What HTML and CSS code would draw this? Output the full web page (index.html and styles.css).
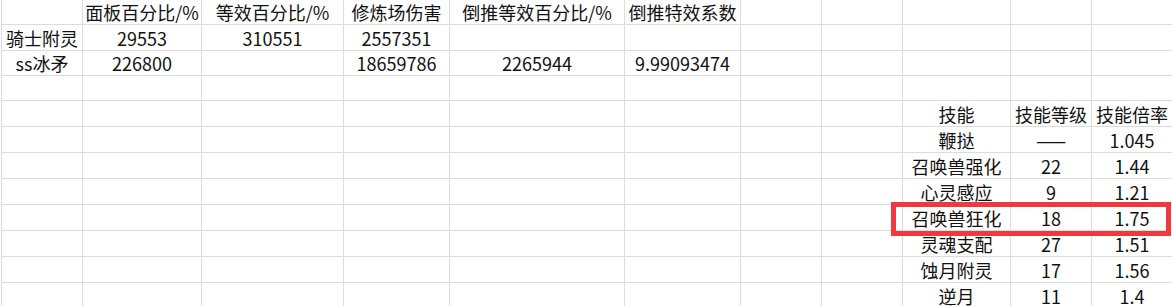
FILE: index.html
```html
<!DOCTYPE html>
<html lang="zh-CN">
<head>
<meta charset="utf-8">
<title>Sheet</title>
<link rel="stylesheet" href="styles.css">
</head>
<body>
<div class="sheet">
  <div class="grid">
    <div></div><div>面板百分比/%</div><div>等效百分比/%</div><div>修炼场伤害</div><div>倒推等效百分比/%</div><div>倒推特效系数</div><div></div><div></div><div></div><div></div><div></div>
    <div>骑士附灵</div><div>29553</div><div>310551</div><div>2557351</div><div></div><div></div><div></div><div></div><div></div><div></div><div></div>
    <div>ss冰矛</div><div>226800</div><div></div><div>18659786</div><div>2265944</div><div>9.99093474</div><div></div><div></div><div></div><div></div><div></div>
    <div></div><div></div><div></div><div></div><div></div><div></div><div></div><div></div><div></div><div></div><div></div>
    <div></div><div></div><div></div><div></div><div></div><div></div><div></div><div></div><div>技能</div><div>技能等级</div><div>技能倍率</div>
    <div></div><div></div><div></div><div></div><div></div><div></div><div></div><div></div><div>鞭挞</div><div>——</div><div>1.045</div>
    <div></div><div></div><div></div><div></div><div></div><div></div><div></div><div></div><div>召唤兽强化</div><div>22</div><div>1.44</div>
    <div></div><div></div><div></div><div></div><div></div><div></div><div></div><div></div><div>心灵感应</div><div>9</div><div>1.21</div>
    <div></div><div></div><div></div><div></div><div></div><div></div><div></div><div></div><div>召唤兽狂化</div><div>18</div><div>1.75</div>
    <div></div><div></div><div></div><div></div><div></div><div></div><div></div><div></div><div>灵魂支配</div><div>27</div><div>1.51</div>
    <div></div><div></div><div></div><div></div><div></div><div></div><div></div><div></div><div>蚀月附灵</div><div>17</div><div>1.56</div>
    <div></div><div></div><div></div><div></div><div></div><div></div><div></div><div></div><div>逆月</div><div>11</div><div>1.4</div>
  </div>
  <div class="highlight"></div>
</div>
</body>
</html>
```

FILE: styles.css
```css
html, body {
  margin: 0;
  padding: 0;
  background: #ffffff;
  overflow: hidden;
}

.sheet {
  position: relative;
  width: 1172px;
  height: 306px;
  overflow: hidden;
  background: #ffffff;
}

.grid {
  margin-left: 1px;
  padding: 0 1px 1px 1px;
  display: grid;
  grid-template-columns: 80px 118px 141px 105px 174px 115px 80px 80px 107px 80px 80px;
  grid-template-rows: 24px 25px 24px 24px 25px 25px 25px 25px 25px 25px 25px 25px;
  gap: 1px;
  background: #dcdcdc;
  width: max-content;
  font-family: "Noto Sans CJK SC", "Noto Sans", sans-serif;
  font-size: 18px;
  color: #111111;
}

.grid > div {
  background: #ffffff;
  display: flex;
  align-items: center;
  justify-content: center;
  line-height: 1;
  white-space: nowrap;
  overflow: hidden;
}

.highlight {
  position: absolute;
  left: 891px;
  top: 202px;
  width: 270px;
  height: 24px;
  border: 5px solid #ee3a3e;
}
```
